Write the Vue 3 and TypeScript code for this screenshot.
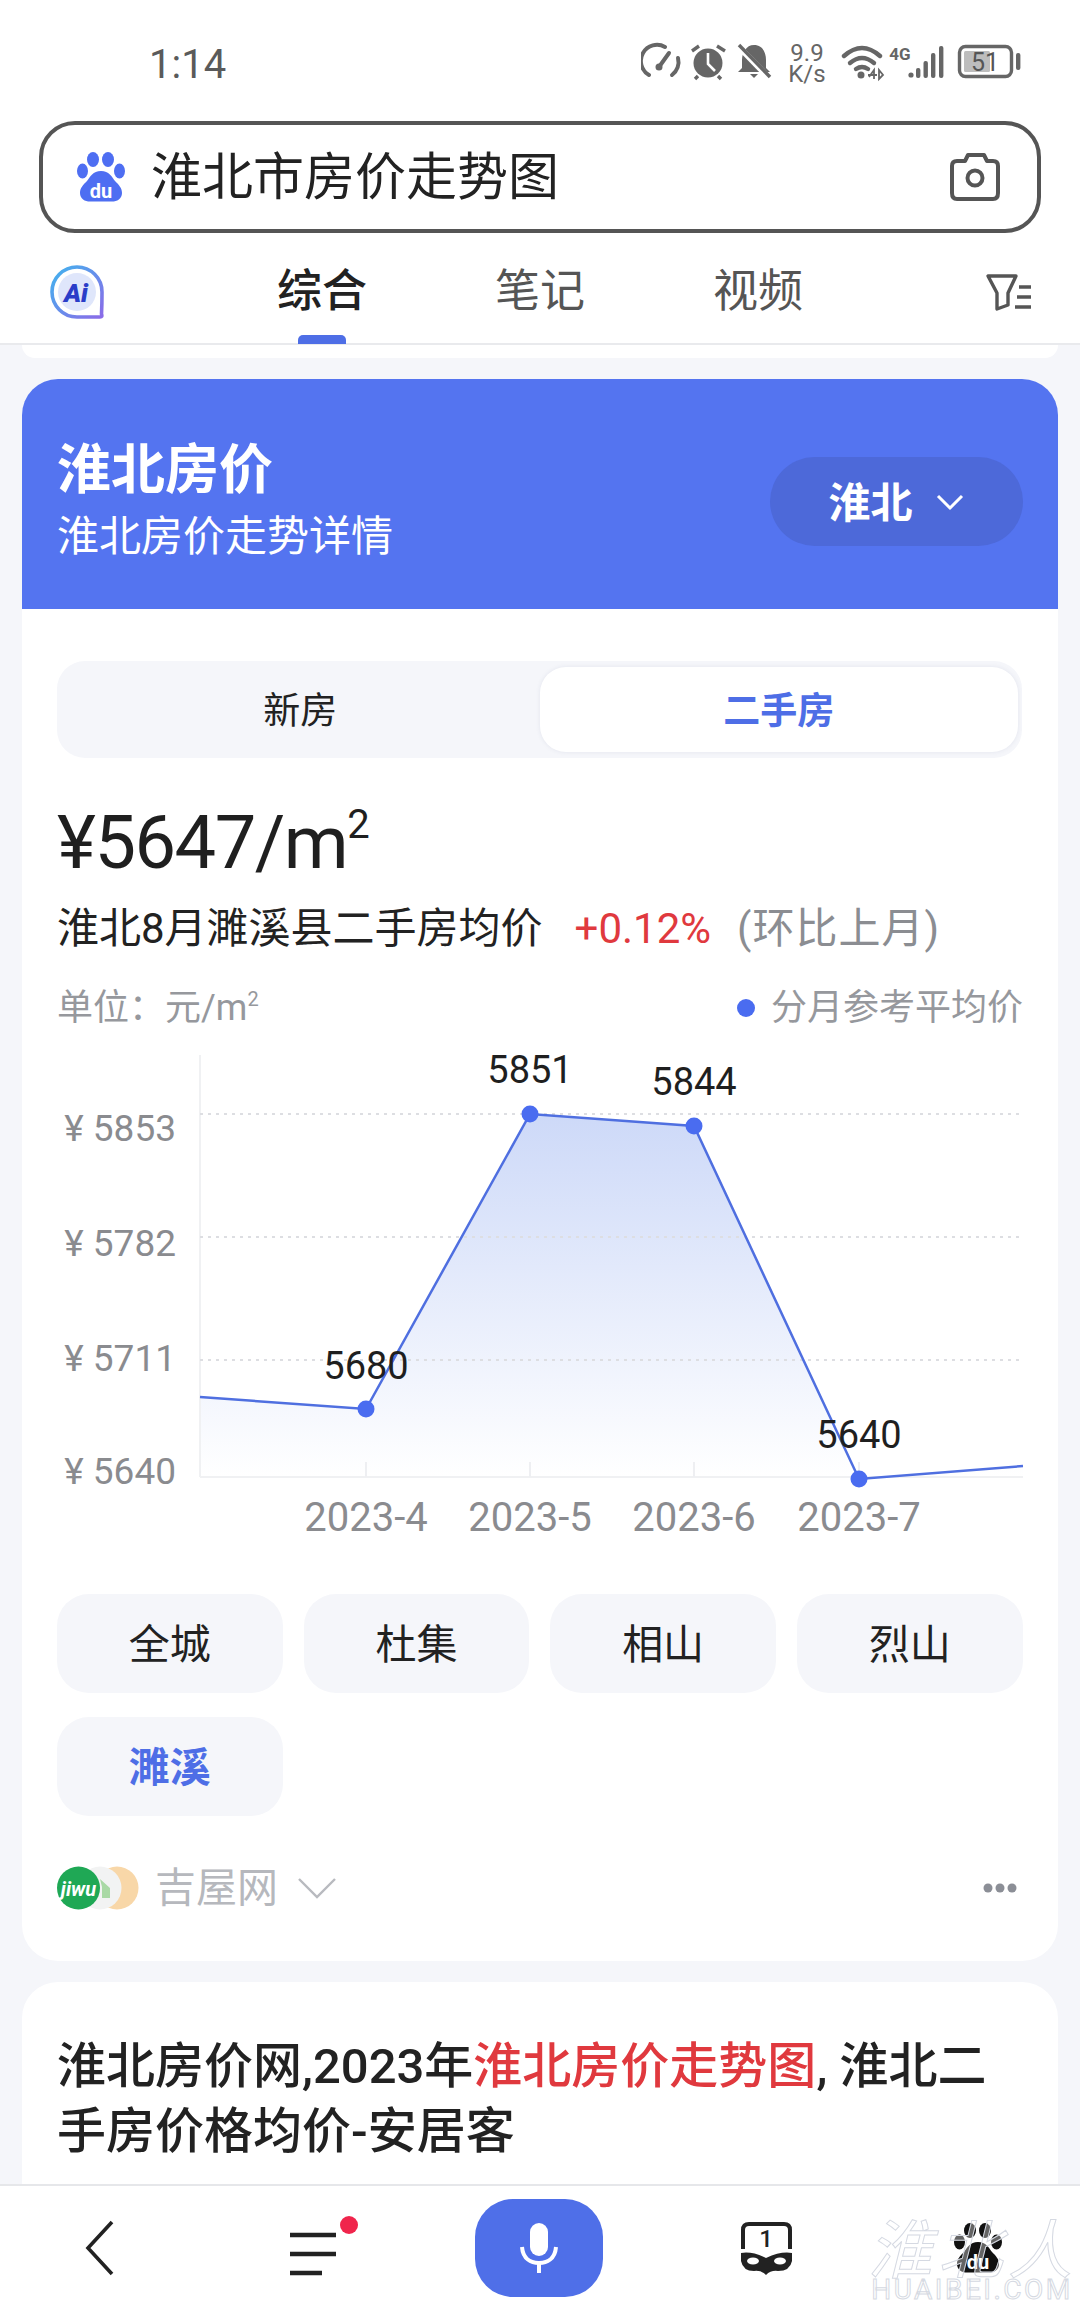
<script setup lang="ts">
const tabs = [
  { label: '综合', active: true },
  { label: '笔记', active: false },
  { label: '视频', active: false },
]
const chips = [
  { label: '全城', active: false },
  { label: '杜集', active: false },
  { label: '相山', active: false },
  { label: '烈山', active: false },
  { label: '濉溪', active: true },
]
// chart geometry, measured from the chart's own top-left corner
const OX = 58
const OY = 1040
const px = (x: number) => x - OX
const py = (y: number) => y - OY
const axisTop = py(1055)
const base = py(1477)
const left = px(200)
const right = px(1023)
const gridY = [1114, 1237, 1360].map(py)
const yLabels = [
  { t: '¥ 5853', y: py(1141) },
  { t: '¥ 5782', y: py(1256) },
  { t: '¥ 5711', y: py(1371) },
  { t: '¥ 5640', y: py(1484) },
]
const points = [
  { x: px(366), y: py(1409), v: '5680', ly: py(1379), m: '2023-4' },
  { x: px(530), y: py(1114), v: '5851', ly: py(1083), m: '2023-5' },
  { x: px(694), y: py(1126), v: '5844', ly: py(1095), m: '2023-6' },
  { x: px(859), y: py(1479), v: '5640', ly: py(1448), m: '2023-7' },
]
const mid = points.map((p) => `${p.x},${p.y}`).join(' ')
const linePts = `${left},${py(1397)} ${mid} ${right},${py(1466)}`
const areaPts = `${left},${base} ${linePts} ${right},${base}`
const tickTop = py(1462)
const xLabelY = py(1531)
const gradTop = py(1114)
</script>

<template>
  <div class="page">
    <div class="status">
      <span class="time">1:14</span>
      <svg class="status-icons" viewBox="0 0 385 44" width="385" height="44">
        <g transform="translate(-640 -40)">
          <g fill="none" stroke="#666" stroke-width="4" stroke-linecap="round">
            <path d="M648 75 A16 16 0 0 1 664 47" />
            <path d="M671 75 A16 16 0 0 0 677 58" />
            <path d="M658 67 L668 53" />
          </g>
          <circle cx="658" cy="67" r="3.5" fill="#666" />
          <circle cx="707" cy="63" r="14.5" fill="#666" />
          <path d="M707 53 V64 L714 71" fill="none" stroke="#fff" stroke-width="2.6" />
          <path d="M691 51 L698 46 M716 46 L724 51 M697 76 L694 79 M717 76 L720 79" stroke="#666" stroke-width="3.4" fill="none" />
          <path d="M753 45 C762 45 765 53 765 60 V68 L769 72 H737 L741 68 V60 C741 53 745 45 753 45 Z M749 74 H757 L753 78 Z" fill="#666" />
          <path d="M738 47 L769 79" stroke="#fff" stroke-width="6" />
          <path d="M738 45 L769 77" stroke="#666" stroke-width="3.4" />
          <g fill="none" stroke="#666" stroke-width="4.4" stroke-linecap="round">
            <path d="M843 56 Q861 40 879 56" />
            <path d="M849 63 Q861 53 873 63" />
            <path d="M855 69 Q861 65 867 69" />
          </g>
          <circle cx="860" cy="75" r="3.5" fill="#666" />
          <path d="M868 77 L873 70 V79 M867 75 H876 M878 70 V79 L882 75 Z" stroke="#666" stroke-width="1.8" fill="none" />
          <g fill="#666">
            <circle cx="910" cy="75" r="2.6" />
            <rect x="915" y="68" width="4.4" height="10" rx="2" />
            <rect x="922.5" y="61" width="4.4" height="17" rx="2" />
            <rect x="930" y="53" width="4.4" height="25" rx="2" />
            <rect x="938" y="46" width="4.4" height="32" rx="2" />
          </g>
          <rect x="958.5" y="46.5" width="52" height="30" rx="6" fill="none" stroke="#666" stroke-width="3.4" />
          <rect x="963" y="51" width="26" height="21" rx="1.5" fill="#bdbdbd" />
          <rect x="1015" y="53" width="4.4" height="17" rx="2" fill="#666" />
        </g>
        <text x="166" y="21" class="speed">9.9</text>
        <text x="166" y="42" class="speed">K/s</text>
        <text x="259" y="20" class="net">4G</text>
        <text x="344" y="31" class="batt">51</text>
      </svg>
    </div>

    <div class="search-wrap">
      <div class="search">
        <svg class="paw" viewBox="0 0 48 50" width="48" height="50">
          <g transform="translate(-77 -152)" fill="#4e6ef2">
            <ellipse cx="82.5" cy="171" rx="5.5" ry="7.5" />
            <ellipse cx="93" cy="159.5" rx="6" ry="7.5" />
            <ellipse cx="108" cy="159.5" rx="6" ry="7.5" />
            <ellipse cx="119.5" cy="171" rx="5.5" ry="7.5" />
            <path d="M101 171 C93 171 90 177 87 181 C83 185 80 188 80 193 C80 199 85 201.5 90 201.5 H112 C117 201.5 122 199 122 193 C122 188 119 185 115 181 C112 177 109 171 101 171 Z" />
          </g>
          <text x="24" y="46" class="du">du</text>
        </svg>
        <span class="query">淮北市房价走势图</span>
        <svg class="camera" viewBox="949 153 52 50" width="52" height="50">
          <path d="M957 162 H965 L968 156 H984 L987 162 H993 Q998 162 998 167 V194 Q998 200 993 200 H957 Q952 200 952 194 V167 Q952 162 957 162 Z" fill="none" stroke="#555" stroke-width="4" stroke-linejoin="round" />
          <circle cx="975" cy="179" r="7.5" fill="none" stroke="#555" stroke-width="4" />
        </svg>
      </div>
    </div>

    <div class="tabs">
      <svg class="ai" viewBox="0 0 56 57" width="56" height="57">
        <defs>
          <linearGradient id="aiStroke" x1="0" y1="0" x2="1" y2="1">
            <stop offset="0" stop-color="#41b4ee" />
            <stop offset="1" stop-color="#8a6be8" />
          </linearGradient>
        </defs>
        <path d="M53 28 A25 25 0 1 0 28 53 H51 Q54 53 52.5 50 Q53 40 53 28 Z" fill="#fff" stroke="url(#aiStroke)" stroke-width="3.6" />
        <circle cx="28" cy="28" r="19" fill="#dfe6fb" />
        <text x="27" y="38" class="ai-text">Ai</text>
      </svg>
      <div v-for="tab in tabs" :key="tab.label" class="tab" :class="{ on: tab.active }">
        {{ tab.label }}
        <span v-if="tab.active" class="tab-bar"></span>
      </div>
      <svg class="filter" viewBox="985 270 48 40" width="48" height="40">
        <path d="M989 274 H1017 L1009 291 V303 L998 307 V291 Z" fill="none" stroke="#555" stroke-width="3.4" stroke-linejoin="round" />
        <path d="M1020 285 H1032 M1018 295 H1032 M1016 305 H1032" stroke="#555" stroke-width="3.4" />
      </svg>
    </div>

    <div class="content">
      <div class="prev-card"></div>

      <section class="card main">
        <header class="hero">
          <div>
            <h1 class="hero-title">淮北房价</h1>
            <p class="hero-sub">淮北房价走势详情</p>
          </div>
          <div class="city">
            <span class="city-name">淮北</span>
            <svg viewBox="0 0 30 18" width="30" height="18">
              <path d="M3 3 L15 15 L27 3" fill="none" stroke="#fff" stroke-width="3" />
            </svg>
          </div>
        </header>

        <div class="body">
          <div class="segment">
            <div class="seg">新房</div>
            <div class="seg on">二手房</div>
          </div>

          <div class="price">¥5647/m<sup>2</sup></div>
          <div class="desc">
            <span>淮北8月濉溪县二手房均价</span>
            <span class="up">+0.12%</span>
            <span class="cmp">(环比上月)</span>
          </div>

          <div class="unit-row">
            <span>单位：元/m<sup>2</sup></span>
            <span class="legend"><i class="dot"></i>分月参考平均价</span>
          </div>

          <svg class="chart" viewBox="0 0 965 530" width="965" height="530">
            <defs>
              <linearGradient id="areaFill" gradientUnits="userSpaceOnUse" x1="0" :y1="gradTop" x2="0" :y2="base">
                <stop offset="0" stop-color="#cdd9f8" />
                <stop offset="1" stop-color="#ffffff" />
              </linearGradient>
            </defs>
            <polygon :points="areaPts" fill="url(#areaFill)" />
            <line :x1="left" :y1="axisTop" :x2="left" :y2="base" stroke="#f0f1f3" stroke-width="2" />
            <line :x1="left" :y1="base" :x2="right" :y2="base" stroke="#f0f1f3" stroke-width="2" />
            <line v-for="y in gridY" :key="y" :x1="left" :y1="y" :x2="right" :y2="y" stroke="#dddee2" stroke-width="2" stroke-dasharray="3 5" />
            <line v-for="p in points" :key="'t' + p.x" :x1="p.x" :y1="tickTop" :x2="p.x" :y2="base" stroke="#eeeff2" stroke-width="2" />
            <polyline :points="linePts" fill="none" stroke="#4f6fe0" stroke-width="2.5" />
            <circle v-for="p in points" :key="'c' + p.x" :cx="p.x" :cy="p.y" r="8.5" fill="#4a6cf0" />
            <text v-for="l in yLabels" :key="l.t" x="118" :y="l.y" class="y-label">{{ l.t }}</text>
            <text v-for="p in points" :key="'v' + p.x" :x="p.x" :y="p.ly" class="val">{{ p.v }}</text>
            <text v-for="p in points" :key="'m' + p.x" :x="p.x" :y="xLabelY" class="x-label">{{ p.m }}</text>
          </svg>

          <div class="chips">
            <div v-for="chip in chips" :key="chip.label" class="chip" :class="{ on: chip.active }">{{ chip.label }}</div>
          </div>

          <div class="source">
            <svg class="logos" viewBox="0 0 82 44" width="82" height="44">
              <g transform="translate(-57 -1866)">
                <circle cx="117" cy="1888" r="21.5" fill="#f8d7a8" />
                <circle cx="100" cy="1888" r="21.5" fill="#f2f3f3" />
                <path d="M100 1879 L110 1888 V1898 H102 V1887 Z" fill="#a9d9a5" />
                <circle cx="78.5" cy="1888" r="21.5" fill="#1fa855" />
              </g>
              <text x="21.5" y="30" class="jiwu">jiwu</text>
            </svg>
            <span class="site">吉屋网</span>
            <svg class="site-arrow" viewBox="0 0 38 22" width="38" height="22">
              <path d="M1 2 L19 20 L37 2" fill="none" stroke="#b8babf" stroke-width="2.4" />
            </svg>
            <svg class="more" viewBox="0 0 34 10" width="34" height="10">
              <circle cx="5" cy="5" r="4.5" fill="#8b8e96" />
              <circle cx="17" cy="5" r="4.5" fill="#8b8e96" />
              <circle cx="29" cy="5" r="4.5" fill="#8b8e96" />
            </svg>
          </div>
        </div>
      </section>

      <section class="card result">
        <h2 class="result-title">淮北房价网,2023年<em>淮北房价走势图</em>, 淮北二手房价格均价-安居客</h2>
      </section>
    </div>

    <nav class="bottom">
      <svg class="b-back" viewBox="0 0 30 56" width="30" height="56">
        <path d="M27 2 L3 28 L27 54" fill="none" stroke="#222" stroke-width="3.6" />
      </svg>
      <div class="b-menu">
        <svg viewBox="288 2208 72 66" width="72" height="66">
          <path d="M290 2228 H336 M290 2247 H336 M290 2266 H322" stroke="#222" stroke-width="4.5" fill="none" />
          <circle cx="349" cy="2218" r="9" fill="#f0254c" />
        </svg>
      </div>
      <div class="b-mic">
        <svg viewBox="0 0 40 50" width="40" height="50">
          <rect x="11" y="0" width="18" height="33" rx="9" fill="#fff" />
          <path d="M3 24 C4 36 12 40 20 40 C28 40 36 36 37 24" fill="none" stroke="#fff" stroke-width="4" />
          <rect x="18" y="40" width="4" height="10" fill="#fff" />
        </svg>
      </div>
      <svg class="b-inc" viewBox="0 0 54 54" width="54" height="54">
        <g transform="translate(-740 -2220)">
          <path d="M743 2248 V2229 Q743 2223 749 2223 H784 Q790 2223 790 2229 V2248" fill="none" stroke="#222" stroke-width="4" />
          <path d="M741 2252 Q752 2250 766 2257 Q781 2250 792 2252 V2260 Q790 2270 778 2270 Q771 2269 766 2274 Q761 2269 754 2270 Q743 2270 741 2260 Z" fill="#222" />
          <ellipse cx="753" cy="2260" rx="6" ry="3.5" fill="#fff" />
          <ellipse cx="780" cy="2260" rx="6" ry="3.5" fill="#fff" />
        </g>
        <text x="26" y="26" class="inc-num">1</text>
      </svg>
      <svg class="b-paw" viewBox="0 0 48 50" width="48" height="52">
        <g transform="translate(-77 -152)" fill="#111">
          <ellipse cx="82.5" cy="171" rx="5.5" ry="7.5" />
          <ellipse cx="93" cy="159.5" rx="6" ry="7.5" />
          <ellipse cx="108" cy="159.5" rx="6" ry="7.5" />
          <ellipse cx="119.5" cy="171" rx="5.5" ry="7.5" />
          <path d="M101 171 C93 171 90 177 87 181 C83 185 80 188 80 193 C80 199 85 201.5 90 201.5 H112 C117 201.5 122 199 122 193 C122 188 119 185 115 181 C112 177 109 171 101 171 Z" />
        </g>
        <text x="24" y="46" class="du">du</text>
      </svg>
    </nav>

    <div class="mark">
      <div class="mark-cn">淮北人</div>
      <div class="mark-en">HUAIBEI.COM</div>
    </div>
  </div>
</template>

<style scoped>
.page {
  position: relative;
  width: 1080px;
  height: 2310px;
  display: flex;
  flex-direction: column;
  overflow: hidden;
  background: #f5f6fa;
  color: #222;
  font-family: Roboto, "Noto Sans CJK SC", sans-serif;
}
.status {
  height: 121px;
  flex: none;
  background: #fff;
  display: flex;
  align-items: flex-start;
  justify-content: space-between;
  padding: 40px 54px 0 149px;
  box-sizing: border-box;
}
.time { font-size: 40px; line-height: 48px; margin-top: 1px; color: #5a5a5a; }
.status-icons { display: block; }
.speed { font-size: 24px; fill: #666; text-anchor: middle; }
.net { font-size: 17px; font-weight: 700; fill: #666; text-anchor: middle; }
.batt { font-size: 25px; fill: #555; text-anchor: middle; }

.search-wrap { flex: none; background: #fff; padding: 0 39px; }
.search {
  box-sizing: border-box;
  height: 112px;
  display: flex;
  align-items: center;
  border: 4px solid #555;
  border-radius: 36px;
  padding: 0 36px 0 34px;
}
.paw { display: block; flex: none; }
.query { font-size: 51px; line-height: 60px; margin: 2px 0 0 26px; flex: 1; color: #222; }
.camera { display: block; flex: none; }
.du { font-size: 20px; font-weight: 700; fill: #fff; text-anchor: middle; }

.tabs {
  flex: none;
  height: 112px;
  box-sizing: border-box;
  background: #fff;
  border-bottom: 2px solid #e9eaed;
  display: flex;
  align-items: center;
  padding: 8px 48px 0 49px;
}
.ai { display: block; flex: none; margin-right: 172px; }
.ai-text { font-size: 26px; font-weight: 900; font-style: italic; fill: #2a3dc8; text-anchor: middle; }
.tab {
  position: relative;
  font-size: 45px;
  line-height: 56px;
  color: #555;
  margin-right: 128px;
}
.tab.on { color: #222; font-weight: 500; }
.tab-bar {
  position: absolute;
  left: 21px;
  top: 71px;
  width: 48px;
  height: 9px;
  border-radius: 5px 5px 0 0;
  background: #4e6ee6;
}
.filter { display: block; margin-left: auto; }

.content { flex: 1; min-height: 0; overflow: hidden; display: flex; flex-direction: column; align-items: center; background: #f5f6fa; }
.prev-card {
  width: 1036px;
  height: 13px;
  flex: none;
  background: #fff;
  border-radius: 0 0 30px 30px;
}
.card { width: 1036px; flex: none; background: #fff; border-radius: 36px; }
.main { margin-top: 21px; height: 1582px; overflow: hidden; }
.hero {
  height: 230px;
  box-sizing: border-box;
  background: #5474f0;
  color: #fff;
  display: flex;
  align-items: flex-start;
  justify-content: space-between;
  padding: 55px 35px 0 35px;
}
.hero-title { margin: 0; font-size: 54px; line-height: 73px; font-weight: 700; }
.hero-sub { margin: 0; font-size: 42px; line-height: 60px; }
.city {
  margin-top: 23px;
  width: 253px;
  height: 89px;
  border-radius: 45px;
  background: #4d69d9;
  display: flex;
  align-items: center;
  justify-content: center;
  gap: 22px;
  font-size: 42px;
  font-weight: 700;
}
.city-name { margin-top: -4px; }
.city svg { display: block; }

.body { padding: 52px 36px 0 35px; }
.segment {
  height: 97px;
  box-sizing: border-box;
  display: flex;
  padding: 6px 4px;
  border-radius: 28px;
  background: #f5f6fa;
}
.seg {
  flex: 1;
  display: flex;
  align-items: center;
  justify-content: center;
  font-size: 37px;
  padding-bottom: 4px;
  box-sizing: border-box;
  color: #222;
  border-radius: 26px;
}
.seg.on { background: #fff; color: #4e6ee6; font-weight: 700; box-shadow: 0 0 4px rgba(120, 130, 160, 0.14); }

.price { margin-top: 39px; height: 92px; font-size: 74px; line-height: 92px; letter-spacing: -1.5px; color: #1f1f1f; }
.price sup { font-size: 40px; line-height: 0; vertical-align: 30px; }
.desc { margin-top: 10px; height: 60px; display: flex; align-items: center; font-size: 42px; line-height: 60px; }
.up { margin-left: 32px; color: #e0393e; }
.cmp { margin-left: 26px; letter-spacing: 1px; color: #8b8d92; }

.unit-row {
  margin-top: 24px;
  margin-right: -1px;
  height: 50px;
  display: flex;
  align-items: center;
  justify-content: space-between;
  font-size: 36px;
  line-height: 50px;
  color: #96989d;
}
.unit-row sup { font-size: 20px; line-height: 0; vertical-align: 14px; }
.legend { display: flex; align-items: center; }
.dot { width: 18px; height: 18px; border-radius: 50%; background: #4a6cf0; margin-right: 16px; }

.chart { display: block; margin: 7px 0 0 1px; overflow: visible; }
.y-label { font-size: 37px; fill: #8a8b8f; text-anchor: end; }
.val { font-size: 38px; fill: #1f1f1f; text-anchor: middle; }
.x-label { font-size: 40px; fill: #8a8b8f; text-anchor: middle; }

.chips {
  margin-top: 24px;
  display: grid;
  grid-template-columns: repeat(4, 225.5px);
  column-gap: 21.2px;
  row-gap: 24px;
}
.chip {
  height: 99px;
  box-sizing: border-box;
  padding-bottom: 6px;
  border-radius: 32px;
  background: #f5f6fa;
  display: flex;
  align-items: center;
  justify-content: center;
  font-size: 41px;
  color: #222;
}
.chip.on { color: #4e6ee6; font-weight: 700; }

.source { margin-top: 50px; height: 44px; display: flex; align-items: center; }
.logos { display: block; flex: none; }
.jiwu { font-size: 20px; font-weight: 700; font-style: italic; fill: #fff; text-anchor: middle; }
.site { margin-left: 16px; font-size: 41px; line-height: 44px; color: #b6b8bd; }
.site-arrow { display: block; margin-left: 20px; }
.more { display: block; margin-left: auto; margin-right: 5px; }

.result { margin-top: 21px; height: 260px; box-sizing: border-box; padding: 52px 36px 0 35px; flex: none; }
.result-title { margin: 0; font-size: 49px; line-height: 65px; font-weight: 500; color: #222; }
.result-title em { font-style: normal; color: #e0393e; }

.bottom {
  flex: none;
  height: 126px;
  box-sizing: border-box;
  background: #fff;
  border-top: 2px solid #e6e7ea;
  display: flex;
  align-items: center;
  position: relative;
}
.b-back { display: block; margin-left: 85px; }
.b-menu { margin-left: 173px; }
.b-menu svg { display: block; }
.b-mic {
  margin-left: 115px;
  width: 128px;
  height: 98px;
  border-radius: 38px;
  background: #4f6fe8;
  display: flex;
  align-items: center;
  justify-content: center;
}
.b-mic svg { display: block; }
.b-inc { display: block; margin-left: 137px; }
.inc-num { font-size: 24px; font-weight: 500; fill: #222; text-anchor: middle; }
.b-paw { display: block; margin-left: 160px; }

.mark { position: absolute; right: 4px; bottom: 8px; width: 208px; text-align: center; pointer-events: none; white-space: nowrap; }
.mark-cn {
  font-size: 64px;
  line-height: 52px;
  letter-spacing: 6px;
  font-style: italic;
  color: rgba(255, 255, 255, 0.35);
  -webkit-text-stroke: 1px #d5d9e2;
}
.mark-en {
  font-size: 28px;
  line-height: 24px;
  letter-spacing: 2.5px;
  color: #fff;
  -webkit-text-stroke: 1px #d5d9e2;
}
</style>
